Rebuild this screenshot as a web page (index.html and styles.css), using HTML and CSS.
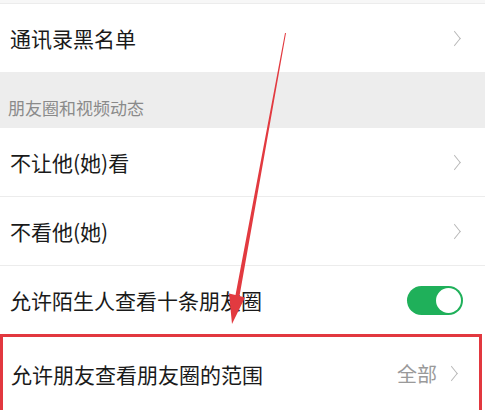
FILE: index.html
```html
<!DOCTYPE html>
<html lang="zh-CN">
<head>
    <meta charset="UTF-8">
    <meta name="viewport" content="width=device-width, initial-scale=1.0">
    <title>朋友权限</title>
    <link rel="stylesheet" href="styles.css">
</head>
<body>
    <div class="page">
        <div class="top-strip"></div>

        <div class="cell">
            <span class="cell-title">通讯录黑名单</span>
            <span class="chevron"></span>
        </div>

        <div class="section-title">朋友圈和视频动态</div>

        <div class="group">
            <div class="cell">
                <span class="cell-title">不让他(她)看</span>
                <span class="chevron"></span>
            </div>
            <div class="cell">
                <span class="cell-title">不看他(她)</span>
                <span class="chevron"></span>
            </div>
            <div class="cell">
                <span class="cell-title">允许陌生人查看十条朋友圈</span>
                <span class="switch"><span class="knob"></span></span>
            </div>
            <div class="cell cell-marked">
                <span class="cell-title">允许朋友查看朋友圈的范围</span>
                <span class="cell-value">全部</span>
                <span class="chevron"></span>
            </div>
        </div>

        <!-- красная стрелка поверх списка -->
        <svg class="arrow" width="485" height="410" viewBox="0 0 485 410">
            <polygon fill="#e23a40" points="285,33 286,33 239.5,296 245,297.5 232,324 229,293.5 235.5,295"/>
        </svg>
    </div>
</body>
</html>
```

FILE: styles.css
```css
body {
    margin: 0;
    background-color: #ffffff;
    font-family: "Noto Sans CJK SC", "Noto Sans", sans-serif;
}

.page {
    position: relative;
    width: 485px;
    height: 410px;
    overflow: hidden;
}

.top-strip {
    height: 3px;
    background-color: #f7f7f7;
    border-bottom: 1px solid #ececec;
}

.cell {
    display: flex;
    align-items: center;
    height: 68px;
    padding: 0 25px 0 10px;
    background-color: #ffffff;
}

.group .cell + .cell {
    border-top: 1px solid #ececec;
}

.cell-title {
    flex-grow: 1;
    font-size: 21px;
    color: #1a1a1a;
}

.cell-value {
    font-size: 20px;
    color: #9a9a9a;
    margin-right: 9px;
}

.chevron {
    width: 10px;
    height: 10px;
    border-top: 1.5px solid #b6b6b6;
    border-right: 1.5px solid #b6b6b6;
    transform: scaleX(0.8) rotate(45deg);
    margin-right: 0;
}

.section-title {
    display: flex;
    align-items: flex-end;
    height: 56px;
    box-sizing: border-box;
    padding: 0 0 8px 8px;
    background-color: #ededed;
    font-size: 17px;
    color: #8a8a8a;
}

.switch {
    display: flex;
    align-items: center;
    justify-content: flex-end;
    width: 56px;
    height: 29px;
    box-sizing: border-box;
    padding: 2px;
    border-radius: 15px;
    background-color: #1fb05a;
    margin-right: -3px;
}

.knob {
    width: 25px;
    height: 25px;
    border-radius: 50%;
    background-color: #ffffff;
}

.group .cell.cell-marked {
    height: 76px;
    box-sizing: border-box;
    padding-left: 8px;
    padding-right: 22px;
    border: 3px solid #e2383f;
    border-bottom: none;
    margin-right: 3px;
}

.arrow {
    position: absolute;
    left: 0;
    top: 0;
}
```
